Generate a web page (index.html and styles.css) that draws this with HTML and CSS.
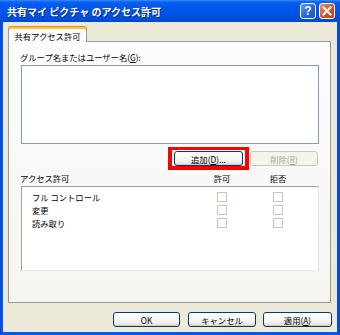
FILE: index.html
```html
<!DOCTYPE html>
<html lang="ja">
<head>
<meta charset="utf-8">
<link rel="stylesheet" href="styles.css">
</head>
<body>
<div class="window">
  <div class="titlebar">
    <span class="title">共有マイ ピクチャ のアクセス許可</span>
    <div class="caption-btns">
      <span class="cbtn help">?</span>
      <span class="cbtn close"><svg width="14" height="14" viewBox="0 0 14 14"><path d="M3.5 3.5 L10.5 10.5 M10.5 3.5 L3.5 10.5" stroke="#fff" stroke-width="2" stroke-linecap="square"/></svg></span>
    </div>
  </div>
  <div class="client">
    <div class="tabs"><div class="tab">共有アクセス許可</div></div>
    <div class="panel">
      <div class="label">グループ名またはユーザー名(<u>G</u>):</div>
      <div class="listbox"></div>
      <div class="btn-row">
        <span class="hl"><button class="btn btn-add">追加(<u>D</u>)...</button></span>
        <button class="btn btn-del" disabled>削除(<u>R</u>)</button>
      </div>
      <div class="perm-head"><span>アクセス許可</span><span class="col">許可</span><span class="col">拒否</span></div>
      <div class="perm-list">
        <div class="perm-row"><span>フル コントロール</span><span class="col"><i class="chk"></i></span><span class="col"><i class="chk"></i></span></div>
        <div class="perm-row"><span>変更</span><span class="col"><i class="chk"></i></span><span class="col"><i class="chk"></i></span></div>
        <div class="perm-row"><span>読み取り</span><span class="col"><i class="chk"></i></span><span class="col"><i class="chk"></i></span></div>
      </div>
    </div>
    <div class="footer">
      <button class="btn btn-ok">OK</button>
      <button class="btn btn-cancel">キャンセル</button>
      <button class="btn btn-apply">適用(<u>A</u>)</button>
    </div>
  </div>
</div>
</body>
</html>
```
FILE: styles.css
```css
html, body {
  margin: 0;
  padding: 0;
}
body {
  width: 340px;
  height: 335px;
  overflow: hidden;
  font-family: "Noto Sans CJK JP", "Noto Sans", sans-serif;
  font-size: 8.3px;
  color: #000;
}
.window {
  width: 340px;
  height: 335px;
  display: flex;
  flex-direction: column;
  background: linear-gradient(90deg, #0842C8 0, #0058EE 2px, #0058EE 337px, #0842C8 340px);
}
.titlebar {
  height: 22px;
  flex: none;
  display: flex;
  align-items: center;
  padding: 0 5px 0 7px;
  background: linear-gradient(#3A8CFF 0, #0A62F0 2px, #0058EE 6px, #0054E3 14px, #004CD8 20px, #0047CF 22px);
}
.title {
  color: #fff;
  font-weight: bold;
  font-size: 10px;
  text-shadow: 1px 1px 0 #0A2A8A;
}
.caption-btns {
  margin-left: auto;
  display: flex;
  gap: 3px;
}
.cbtn {
  width: 16px;
  height: 16px;
  box-sizing: border-box;
  border: 1px solid #fff;
  border-radius: 3px;
  display: flex;
  align-items: center;
  justify-content: center;
}
.help {
  background: linear-gradient(135deg, #5C9BFF, #2462E0 60%, #1A52C8);
  color: #fff;
  font-family: "Liberation Sans", sans-serif;
  font-weight: bold;
  font-size: 12px;
  line-height: 14px;
}
.close {
  background: linear-gradient(135deg, #F08E6E, #D8532C 55%, #B83A18);
}
.client {
  flex: 1;
  margin: 0 3px 3px 3px;
  background: #ECE9D8;
  padding: 4px 5px 0 5px;
  display: flex;
  flex-direction: column;
}
.tabs {
  display: flex;
  height: 15px;
  flex: none;
}
.tab {
  width: 79px;
  height: 16px;
  box-sizing: border-box;
  border: 1px solid #919B9C;
  border-top: 1px solid #E68B2C;
  border-bottom: none;
  border-radius: 3px 3px 0 0;
  box-shadow: inset 0 2px 0 #FFC83C;
  background: #FCFCFE;
  display: flex;
  align-items: center;
  justify-content: center;
  padding-top: 2px;
  position: relative;
  z-index: 1;
}
.panel {
  height: 262px;
  flex: none;
  box-sizing: border-box;
  margin-right: 1px;
  border: 1px solid #919B9C;
  background: linear-gradient(#FCFCFE, #F6F5F0);
  padding: 10px 11px 0 12px;
  display: flex;
  flex-direction: column;
}
.label {
  line-height: 11px;
  margin-left: -1px;
}
.listbox {
  margin-top: 2px;
  height: 79px;
  box-sizing: border-box;
  border: 1px solid #7F9DB9;
  background: #fff;
}
.btn-row {
  margin-top: 7px;
  display: flex;
  justify-content: flex-end;
  gap: 7px;
  padding-right: 1px;
}
.btn {
  font-family: inherit;
  font-size: 8.3px;
  height: 15px;
  padding: 0;
  box-sizing: border-box;
  border: 1px solid #003C74;
  border-radius: 3px;
  background: linear-gradient(#FFFFFF, #F4F4F0 70%, #DCD8CC);
  color: #000;
  line-height: 12px;
  box-shadow: inset 0 -1px 0 #D6D0C5;
}
.btn:disabled {
  border-color: #C9C7BA;
  color: #ACA899;
  background: #F5F4EA;
  box-shadow: none;
}
.hl {
  position: relative;
  display: flex;
}
.hl::after {
  content: "";
  position: absolute;
  left: -6px;
  right: -6px;
  top: -4px;
  bottom: -4px;
  border: 4px solid #FF0000;
  border-top-width: 3px;
}
.btn-add { width: 69px; }
.btn-del { width: 68px; }
.perm-head {
  margin-top: 6px;
  line-height: 12px;
  display: grid;
  grid-template-columns: 1fr 56px 56px;
  padding-right: 13px;
  margin-left: -1px;
}
.col {
  display: flex;
  justify-content: center;
}
.perm-list {
  margin-top: 2px;
  height: 85px;
  box-sizing: border-box;
  border: 1px solid #A0A0A0;
  border-right-color: #E4E2DA;
  border-bottom-color: #ECEBE6;
  background: #fff;
  padding: 3px 12px 0 10px;
}
.perm-row {
  height: 13px;
  display: grid;
  grid-template-columns: 1fr 56px 56px;
  align-items: center;
}
.chk {
  display: block;
  width: 10px;
  height: 10px;
  box-sizing: border-box;
  border: 1px solid #C9C7BA;
  background: #fff;
}
.footer {
  margin-top: 9px;
  display: flex;
  justify-content: flex-end;
  gap: 8px;
}
.btn-ok { width: 67px; }
.btn-cancel { width: 68px; margin-right: -1px; }
.btn-apply { width: 69px; }
u { text-decoration: underline; }
```
